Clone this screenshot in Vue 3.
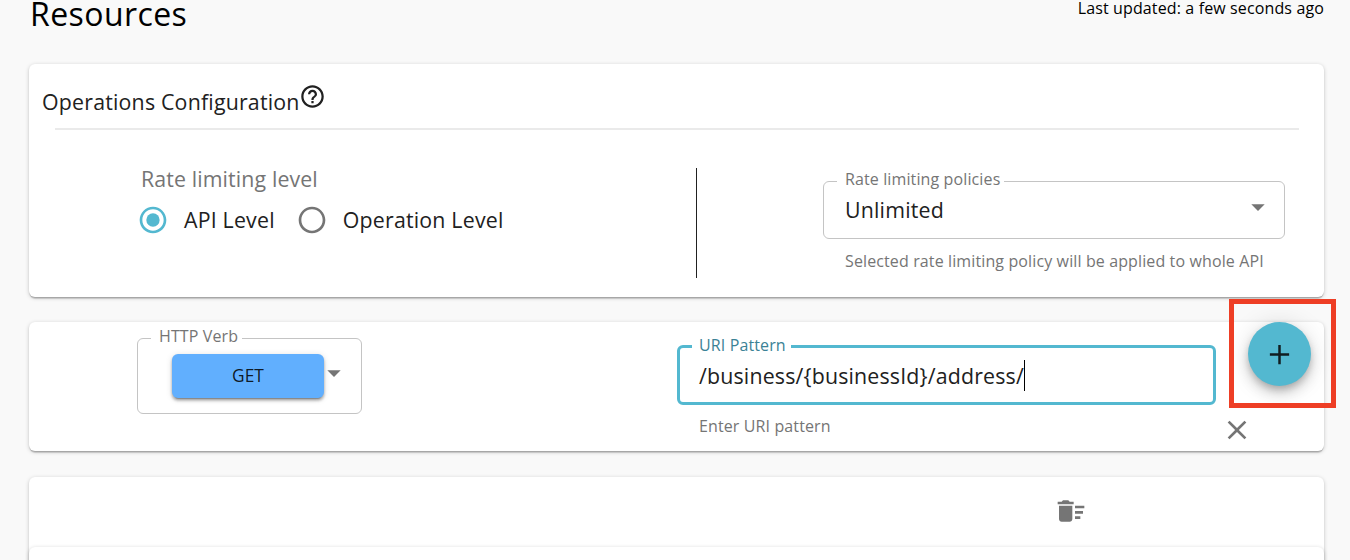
<script setup>
import { ref } from 'vue'

const level = ref('api')
const levels = [
  { id: 'api', label: 'API Level' },
  { id: 'operation', label: 'Operation Level' },
]
const pattern = ref('/business/{businessId}/address/')
</script>

<template>
  <main class="page">
    <header class="header">
      <h1>Resources</h1>
      <span class="updated">Last updated: a few seconds ago</span>
    </header>

    <section class="card config">
      <div class="config-title">
        <h2>Operations Configuration</h2>
        <svg class="help" viewBox="0 0 24 24"><path d="M11 18h2v-2h-2v2zm1-16C6.48 2 2 6.48 2 12s4.48 10 10 10 10-4.48 10-10S17.52 2 12 2zm0 18c-4.41 0-8-3.59-8-8s3.59-8 8-8 8 3.59 8 8-3.59 8-8 8zm0-14c-2.21 0-4 1.79-4 4h2c0-1.1.9-2 2-2s2 .9 2 2c0 2-3 1.75-3 5h2c0-2.25 3-2.5 3-5 0-2.21-1.79-4-4-4z" /></svg>
      </div>
      <hr class="rule" />
      <div class="config-body">
        <div class="levels">
          <div class="levels-label">Rate limiting level</div>
          <div class="radios">
            <div v-for="l in levels" :key="l.id" class="radio" :class="{ on: level === l.id }" @click="level = l.id">
              <svg viewBox="0 0 24 24">
                <path d="M12 2C6.48 2 2 6.48 2 12s4.48 10 10 10 10-4.48 10-10S17.52 2 12 2zm0 18c-4.42 0-8-3.58-8-8s3.58-8 8-8 8 3.58 8 8-3.58 8-8 8z" />
                <circle v-if="level === l.id" cx="12" cy="12" r="5" />
              </svg>
              <span>{{ l.label }}</span>
            </div>
          </div>
        </div>
        <div class="separator"></div>
        <div class="policies">
          <div class="field select">
            <span class="legend">Rate limiting policies</span>
            <span class="value">Unlimited</span>
            <svg class="arrow" viewBox="0 0 24 24"><path d="M7 10l5 5 5-5z" /></svg>
          </div>
          <p class="helper">Selected rate limiting policy will be applied to whole API</p>
        </div>
      </div>
    </section>

    <section class="card operation">
      <div class="field verb">
        <span class="legend">HTTP Verb</span>
        <button class="get">GET</button>
        <svg class="arrow" viewBox="0 0 24 24"><path d="M7 10l5 5 5-5z" /></svg>
      </div>
      <div class="uri">
        <div class="field focused">
          <span class="legend">URI Pattern</span>
          <span class="value">{{ pattern }}</span><i class="caret"></i>
        </div>
        <p class="helper">Enter URI pattern</p>
      </div>
      <div class="actions">
        <button class="fab"><svg viewBox="0 0 24 24"><path d="M19 12.9h-6.1V19h-1.8v-6.1H5v-1.8h6.1V5h1.8v6.1H19z" /></svg></button>
        <svg class="close" viewBox="0 0 24 24"><path d="M19 6.41L17.59 5 12 10.59 6.41 5 5 6.41 10.59 12 5 17.59 6.41 19 12 13.41 17.59 19 19 17.59 13.41 12z" /></svg>
      </div>
      <div class="highlight"></div>
    </section>

    <section class="card list">
      <div class="toolbar">
        <svg viewBox="0 0 24 24"><path d="M15 16h4v2h-4zm0-8h7v2h-7zm0 4h6v2h-6zM3 18c0 1.1.9 2 2 2h6c1.1 0 2-.9 2-2V8H3v10zM14 5h-3l-1-1H6L5 5H2v2h12z" /></svg>
      </div>
      <div class="card item"></div>
    </section>
  </main>
</template>

<style>
body {
  margin: 0;
  overflow: hidden;
}
</style>

<style scoped>
* {
  box-sizing: border-box;
}
.page {
  height: 560px;
  overflow: hidden;
  padding: 0 26px 0 29px;
  background: #f9f9f9;
  color: #212121;
  font-family: "Open Sans", "Noto Sans", sans-serif;
  font-size: 21.33px;
  line-height: 30px;
  letter-spacing: .2px;
  white-space: nowrap;
}
h1, h2, p {
  margin: 0;
  font-weight: 400;
}
svg {
  display: block;
  flex: none;
  width: 32px;
  height: 32px;
  fill: #757575;
}
.header {
  display: flex;
  align-items: flex-start;
  justify-content: space-between;
  height: 64px;
  color: #000;
}
h1 {
  margin-left: 1px;
  font-size: 32px;
  line-height: 28px;
  letter-spacing: .42px;
}
.updated {
  font-size: 16px;
  line-height: 16px;
  letter-spacing: .13px;
}
.card {
  background: #fff;
  border-radius: 6px;
  box-shadow: 0 1px 4px rgba(0, 0, 0, .2), 0 1px 1px rgba(0, 0, 0, .14), 0 3px 1px -1px rgba(0, 0, 0, .12);
}
.config {
  height: 233px;
  padding-top: 22px;
}
.config-title {
  display: flex;
  height: 42px;
  padding-left: 13px;
}
h2 {
  margin-top: 1px;
  font-size: 21.33px;
}
.config-title .help {
  width: 27px;
  height: 27px;
  margin: -3px 0 0 -1px;
  fill: #212121;
}
.rule {
  height: 2px;
  margin: 0 25px 0 26px;
  border: 0;
  background: #eaeaea;
}
.config-body {
  display: flex;
}
.levels {
  width: 667px;
  padding: 34px 0 0 108px;
}
.levels-label {
  padding-left: 4px;
  color: #757575;
  letter-spacing: .12px;
}
.radios {
  display: flex;
  gap: 21px;
  margin-top: 10px;
}
.radio {
  display: flex;
  align-items: center;
  gap: 15px;
}
.radio.on svg {
  fill: #53b8d0;
}
.separator {
  width: 1px;
  height: 110px;
  margin-top: 38px;
  background: #212121;
}
.policies {
  width: 462px;
  margin: 51px 0 0 126px;
}
.field {
  position: relative;
  display: flex;
  border: 1px solid #c4c4c4;
  border-radius: 6px;
}
.legend {
  position: absolute;
  top: -15px;
  left: 13px;
  padding: 0 4px 0 8px;
  background: #fff;
  color: #757575;
  font-size: 16px;
  line-height: 24px;
  letter-spacing: .12px;
}
.select {
  justify-content: space-between;
  height: 58px;
  padding: 13px 10px 0 21px;
}
.select .arrow {
  margin-top: -4px;
}
.helper {
  padding: 10px 0 0 22px;
  color: #757575;
  font-size: 16px;
  line-height: 24px;
  letter-spacing: .12px;
}
.operation {
  position: relative;
  display: flex;
  height: 129px;
  margin-top: 25px;
}
.verb {
  width: 225px;
  height: 76px;
  margin: 16px 0 0 108px;
  padding: 15px 0 0 34px;
}
.verb .arrow {
  margin: 3px 0 0 -6px;
}
.get {
  width: 152px;
  height: 44px;
  padding: 0 0 2px;
  border: 0;
  border-radius: 6px;
  background: #61affe;
  box-shadow: 0 4px 1px -3px rgba(0, 0, 0, .2), 0 3px 3px rgba(0, 0, 0, .14), 0 1px 7px rgba(0, 0, 0, .12), 0 2px 3px rgba(0, 0, 0, .2);
  color: rgba(0, 0, 0, .87);
  font: 17.33px/24px "Open Sans", "Noto Sans", sans-serif;
}
.uri {
  width: 539px;
  margin: 23px 0 0 315px;
}
.focused {
  height: 60px;
  padding: 13px 0 0 19px;
  border: 3px solid #53b8d0;
}
.focused .legend {
  top: -15px;
  left: 12px;
  padding: 0 5px 0 7px;
  color: #3b8296;
}
.focused .value {
  letter-spacing: .18px;
}
.caret {
  width: 1px;
  height: 31px;
  margin-top: -1px;
  background: #000;
}
.uri .helper {
  padding-top: 9px;
}
.actions {
  display: flex;
  flex-direction: column;
  margin-left: 5px;
}
.fab {
  display: flex;
  align-items: center;
  justify-content: center;
  width: 63px;
  height: 64px;
  margin-left: 27px;
  padding: 0;
  border: 0;
  border-radius: 50%;
  background: #53b8d0;
  box-shadow: 0 4px 7px -1px rgba(0, 0, 0, .2), 0 8px 13px rgba(0, 0, 0, .14), 0 1px 24px rgba(0, 0, 0, .12);
}
.fab svg {
  width: 33px;
  height: 33px;
  fill: #111d20;
}
.close {
  margin-top: 28px;
}
.highlight {
  position: absolute;
  top: -23px;
  left: 1200px;
  width: 107px;
  height: 109px;
  border: 5px solid #ee3e25;
}
.list {
  height: 120px;
  margin-top: 26px;
}
.toolbar {
  height: 70px;
  padding: 18px 0 0 1026px;
}
.item {
  height: 60px;
}
</style>
